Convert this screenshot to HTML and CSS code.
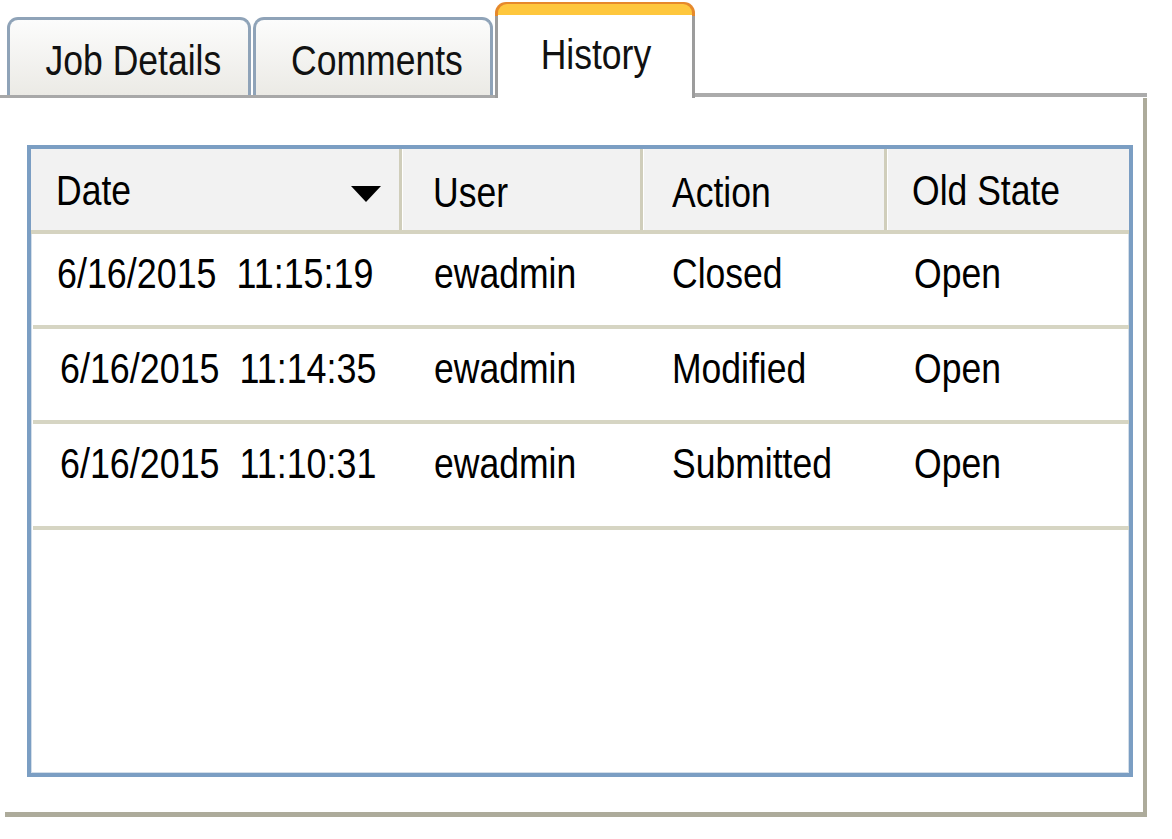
FILE: index.html
```html
<!DOCTYPE html>
<html>
<head>
<meta charset="utf-8">
<title>History</title>
<link rel="stylesheet" href="styles.css">
</head>
<body>
<div class="window">
  <div class="tabbar">
    <div class="tabs-left">
      <div class="tab tab-job"><span class="t tc">Job Details</span></div>
      <div class="tab tab-comments"><span class="t tc">Comments</span></div>
    </div>
    <div class="tab-active">
      <div class="tab-active-inner"><span class="t tc">History</span></div>
    </div>
    <div class="tab-fill"></div>
  </div>
  <div class="panel">
    <div class="grid-box">
      <div class="grid-head">
        <div class="hcell c1"><span class="t">Date</span>
          <svg class="sort" width="30" height="16" viewBox="0 0 30 16"><polygon points="0,0 30,0 15,16" fill="#000"/></svg>
        </div>
        <div class="hcell c2"><span class="t">User</span></div>
        <div class="hcell c3"><span class="t">Action</span></div>
        <div class="hcell c4 last"><span class="t">Old State</span></div>
      </div>
      <div class="grid-row r1">
        <div class="cell c1"><span class="t">6/16/2015&nbsp; 11:15:19</span></div>
        <div class="cell c2"><span class="t">ewadmin</span></div>
        <div class="cell c3"><span class="t">Closed</span></div>
        <div class="cell c4"><span class="t">Open</span></div>
      </div>
      <div class="grid-row r2">
        <div class="cell c1"><span class="t">6/16/2015&nbsp; 11:14:35</span></div>
        <div class="cell c2"><span class="t">ewadmin</span></div>
        <div class="cell c3"><span class="t">Modified</span></div>
        <div class="cell c4"><span class="t">Open</span></div>
      </div>
      <div class="grid-row r3">
        <div class="cell c1"><span class="t">6/16/2015&nbsp; 11:10:31</span></div>
        <div class="cell c2"><span class="t">ewadmin</span></div>
        <div class="cell c3"><span class="t">Submitted</span></div>
        <div class="cell c4"><span class="t">Open</span></div>
      </div>
    </div>
  </div>
</div>
</body>
</html>
```
FILE: styles.css
```css
html, body {
  margin: 0;
  padding: 0;
  background: #ffffff;
}
body {
  font-family: "Liberation Sans", Arial, sans-serif;
  font-size: 43px;
  line-height: 50px;
  color: #000;
}
/* condensed (Arial Narrow-like) text */
.t {
  display: inline-block;
  white-space: nowrap;
  transform: scaleX(0.826);
  transform-origin: 0 50%;
}
.t.tc {
  transform-origin: 50% 50%;
}
.window {
  width: 1147px;
}
.tabbar {
  display: flex;
  align-items: flex-end;
  height: 98px;
}
.tabs-left {
  display: flex;
  gap: 2px;
  padding: 0 2px 0 7px;
  border-bottom: 3px solid #a8a8a8;
}
.tab {
  box-sizing: border-box;
  height: 78px;
  border: 3px solid #8fa3b8;
  border-bottom: none;
  border-radius: 11px 11px 0 0;
  background: linear-gradient(to bottom, #fcfcfc, #ebeae5);
  display: flex;
  justify-content: center;
  padding: 15px 0 0 8px;
  color: #111;
}
.tab-job { width: 244px; }
.tab-comments { width: 240px; }
.tab-active {
  box-sizing: border-box;
  width: 200px;
  height: 96px;
  padding: 2px 3px 0 3px;
  border-radius: 11px 11px 0 0;
  background: linear-gradient(to bottom, #e6892b 0, #e6892b 14px, #9c9c9c 14px);
}
.tab-active-inner {
  height: 100%;
  box-sizing: border-box;
  border-radius: 9px 9px 0 0;
  background: linear-gradient(to bottom, #fec73d 0, #fec73d 11px, #ffffff 11px);
  display: flex;
  justify-content: center;
  padding: 25px 0 0 2px;
  color: #111;
}
.tab-fill {
  flex: 1;
  border-bottom: 4px solid #ababab;
  margin-bottom: 1px;
}
.panel {
  margin-left: 5px;
  height: 719px;
  box-sizing: border-box;
  border-right: 4px solid #adab9b;
  border-bottom: 5px solid #adab9b;
  padding: 47px 10px 35px 22px;
}
.grid-box {
  box-sizing: border-box;
  height: 632px;
  border: 4px solid #7b9ec3;
  box-shadow: inset 0 0 0 1px #d3dee9;
  background: #fff;
}
.grid-head,
.grid-row {
  display: grid;
  grid-template-columns: 371px 241px 244px 1fr;
}
.grid-head {
  height: 85px;
  box-sizing: border-box;
  background: #f2f2f2;
  border-bottom: 4px solid #d5d3c0;
}
.hcell {
  display: flex;
  align-items: center;
  border-right: 3px solid #d0cebb;
  box-shadow: 1px 0 0 #ffffff;
}
.hcell.last {
  border-right: none;
  box-shadow: none;
}
.hcell.c1 {
  justify-content: space-between;
  padding: 0 18px 0 25px;
}
.hcell.c1 .t {
  width: 100px;
}
.sort {
  margin-top: 9px;
}
.hcell.c2 { padding-left: 31px; padding-top: 4px; }
.hcell.c3 { padding-left: 29px; padding-top: 4px; }
.hcell.c4 { padding-left: 25px; }
.grid-row {
  box-sizing: border-box;
  height: 95px;
  border-bottom: 4px solid #d6d5c3;
  margin-left: 2px;
}
.grid-row.r3 {
  height: 106px;
}
.cell {
  padding-top: 14px;
  white-space: nowrap;
  min-width: 0;
}
.cell.c1 .t { transform: scaleX(0.834); }
.cell.c1 { padding-left: 24px; }
.r2 .cell.c1, .r3 .cell.c1 { padding-left: 27px; }
.cell.c2 { padding-left: 30px; }
.cell.c3 { padding-left: 27px; }
.cell.c4 { padding-left: 25px; }
```
